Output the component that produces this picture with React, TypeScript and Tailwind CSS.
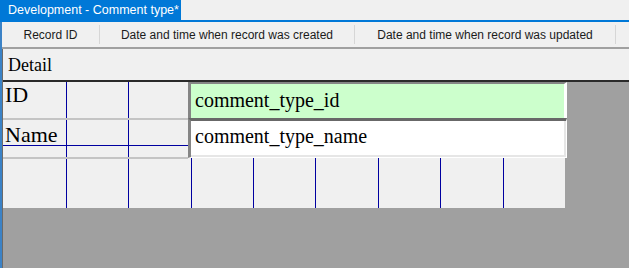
import React from "react";

const sans = "[font-family:'Liberation_Sans',Arial,sans-serif]";
const serif = "[font-family:'Liberation_Serif','Times_New_Roman',serif]";

export default function App() {
  const cols = [64, 62, 63, 62, 62, 63, 62, 63];
  return (
    <div className="w-[629px] h-[268px] bg-[#f0f0f0] flex flex-col overflow-hidden">
      {/* Tab strip */}
      <div className="h-[20px] flex">
        <div className={`w-[181px] bg-[#0078d7] text-white text-[12.5px] leading-[21px] pl-[8px] whitespace-nowrap overflow-hidden ${sans}`}>
          Development - Comment type*
        </div>
        <div className="flex-1 bg-[#f0f0f0]" />
      </div>
      <div className="h-[2px] bg-[#0078d7]" />
      <div className="flex-1 flex flex-col border-l-2 border-[#3b82c6]">
        {/* Column header row */}
        <div className={`h-[25px] flex items-center text-[12px] text-[#1b1b1b] whitespace-nowrap ${sans}`}>
          <div className="w-[97px] text-center">Record ID</div>
          <div className="w-px h-[19px] bg-[#d6d6d6]" />
          <div className="w-[254px] text-center">Date and time when record was created</div>
          <div className="w-px h-[19px] bg-[#d6d6d6]" />
          <div className="w-[260px] text-center">Date and time when record was updated</div>
          <div className="w-px h-[19px] bg-[#d6d6d6]" />
          <div className="flex-1" />
        </div>
        <div className="h-[2px] bg-[#a0a0a0]" />
        <div className="flex-1 flex flex-col border-l border-[#6a6a6a]">
          {/* Detail band */}
          <div className={`h-[31px] pl-[5px] pt-[6px] text-[18px] leading-[20px] text-black ${serif}`}>Detail</div>
          <div className="h-[2px] bg-[#2a2a2a]" />
          <div className="flex-1 flex flex-col bg-[#a0a0a0]">
            <div className="flex">
              {/* Form canvas */}
              <div className="relative z-10 w-[562px] h-[126px] bg-[#f0f0f0] grid">
                {/* vertical grid lines */}
                <div className="[grid-area:1/1] flex h-[126px]">
                  {cols.map((w, i) => (
                    <div key={i} className="h-full border-r border-[#0000a0]" style={{ width: w }} />
                  ))}
                </div>
                {/* horizontal grid line */}
                <div className="[grid-area:1/1] h-[64px] border-b border-[#0000a0]" />
                {/* controls */}
                <div className="[grid-area:1/1] flex items-start">
                  <div className={`w-[185px] flex flex-col text-[22px] leading-[24px] text-black ${serif}`}>
                    <div className="h-[38px] border-b-2 border-[#c4c4c4] pl-[2px] pt-[1px]">ID</div>
                    <div className="h-[39px] border-b-2 border-[#c4c4c4] pl-[2px] pt-[3px]">Name</div>
                  </div>
                  <div className={`w-[379px] flex flex-col text-[20px] leading-[23px] text-black ${serif}`}>
                    <div className="h-[36px] bg-[#ccffcc] border-t-2 border-l-[3px] border-[#858585] border-r-[3px] border-r-white pl-[4px] pt-[5px]">
                      comment_type_id
                    </div>
                    <div className="h-[40px] border-t-[3px] border-t-[#686868] border-l-[3px] border-l-[#858585] border-r border-b border-r-white border-b-white bg-white">
                      <div className="h-full border-r-2 border-b-2 border-[#e6e6e6] pl-[4px] pt-[4px]">
                        comment_type_name
                      </div>
                    </div>
                  </div>
                </div>
              </div>
              <div className="flex-1 bg-[#a0a0a0]" />
            </div>
            <div className="flex-1" />
          </div>
        </div>
      </div>
    </div>
  );
}
